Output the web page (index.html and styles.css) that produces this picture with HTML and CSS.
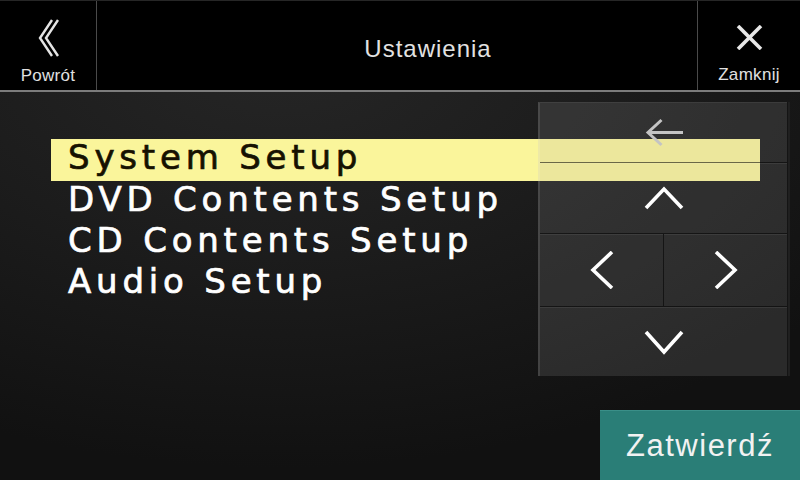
FILE: index.html
```html
<!DOCTYPE html>
<html lang="pl">
<head>
<meta charset="utf-8">
<title>Ustawienia</title>
<link rel="stylesheet" href="styles.css">
</head>
<body>
<div class="app">
  <header class="header">
    <div class="nav-btn back">
      <svg class="icon-back" width="22" height="38" viewBox="0 0 22 38">
        <polyline points="14,1 2,19 14,37" />
        <polyline points="20,1 8,19 20,37" />
      </svg>
      <span class="nav-label">Powrót</span>
    </div>
    <div class="title">Ustawienia</div>
    <div class="nav-btn close">
      <svg class="icon-close" width="27" height="25" viewBox="0 0 27 25">
        <line x1="2" y1="1" x2="25" y2="24" />
        <line x1="25" y1="1" x2="2" y2="24" />
      </svg>
      <span class="nav-label">Zamknij</span>
    </div>
  </header>
  <main class="content">
    <ul class="menu">
      <li class="item selected">System Setup</li>
      <li class="item">DVD Contents Setup</li>
      <li class="item">CD Contents Setup</li>
      <li class="item">Audio Setup</li>
    </ul>
    <div class="pad">
      <div class="pad-btn wide first">
        <svg width="40" height="30" viewBox="0 0 40 30" class="ic-return">
          <path d="M39 14.5 H4 M17.5 2 L4 14.5 L17.5 27" />
        </svg>
      </div>
      <div class="pad-btn wide">
        <svg width="40" height="24" viewBox="0 0 40 24" class="ic">
          <polyline points="2,22 20,3 38,22" />
        </svg>
      </div>
      <div class="pad-btn">
        <svg width="26" height="38" viewBox="0 0 26 38" class="ic">
          <polyline points="23,1 4,19 23,37" />
        </svg>
      </div>
      <div class="pad-btn right">
        <svg width="26" height="38" viewBox="0 0 26 38" class="ic">
          <polyline points="3,1 22,19 3,37" />
        </svg>
      </div>
      <div class="pad-btn wide">
        <svg width="40" height="26" viewBox="0 0 40 26" class="ic">
          <polyline points="2,3 20,23 38,3" />
        </svg>
      </div>
    </div>
    <div class="confirm">Zatwierdź</div>
  </main>
</div>
</body>
</html>
```
FILE: styles.css
```css
* { box-sizing: border-box; }
html, body {
  margin: 0;
  padding: 0;
  width: 800px;
  height: 480px;
  overflow: hidden;
  background: #000;
}
body {
  font-family: "Liberation Sans", Arial, sans-serif;
}
.app {
  width: 800px;
  height: 480px;
  display: flex;
  flex-direction: column;
  background: radial-gradient(ellipse 700px 420px at 35% 10%, #262626 0%, #1c1c1c 50%, #111 100%);
}
.header {
  height: 92px;
  flex: none;
  display: flex;
  background: #000;
  border-top: 1px solid #262626;
  border-bottom: 2px solid #7c7c7c;
}
.nav-btn {
  display: flex;
  flex-direction: column;
  align-items: center;
  color: #e0e0e0;
}
.back {
  width: 97px;
  border-right: 1px solid #4a4a4a;
  padding-top: 18px;
}
.close {
  width: 103px;
  border-left: 1px solid #4a4a4a;
  padding-top: 24px;
}
.nav-label {
  font-size: 17px;
  line-height: 20px;
  letter-spacing: 0.3px;
}
.icon-back {
  margin-left: 2px;
  margin-bottom: 9px;
}
.icon-back polyline {
  fill: none;
  stroke: #e4e4e4;
  stroke-width: 2.4;
}
.icon-close {
  margin-bottom: 15px;
}
.icon-close line {
  stroke: #e8e8e8;
  stroke-width: 3.6;
}
.title {
  flex: 1;
  text-align: center;
  padding-left: 62px;
  padding-top: 34px;
  font-size: 24px;
  line-height: 28px;
  letter-spacing: 1px;
  color: #e2e2e2;
}
.content {
  flex: 1;
  display: grid;
  grid-template-columns: 51px 487px 62px 160px 27px 13px;
  grid-template-rows: 1fr 70px;
}
.menu {
  grid-column: 2 / 5;
  grid-row: 1;
  list-style: none;
  margin: 47px 0 0 0;
  padding: 0;
  font-family: "DejaVu Sans", sans-serif;
  font-size: 34px;
  letter-spacing: 4.8px;
  color: #fff;
  -webkit-text-stroke: 0.7px currentColor;
}
.item {
  line-height: 37px;
  padding: 0 0 4px 17px;
  white-space: nowrap;
}
.item.selected {
  padding-bottom: 5px;
  background: #faf59b;
  color: #161100;
}
.pad {
  grid-column: 3 / 6;
  grid-row: 1;
  margin-top: 10px;
  height: 274px;
  align-self: start;
  display: grid;
  grid-template-columns: 123px 1fr;
  grid-template-rows: 59px 71px 73px 71px;
  background: rgba(168, 168, 168, 0.17);
  border-left: 2px solid rgba(255, 255, 255, 0.1);
  border-top: 1px solid rgba(255, 255, 255, 0.06);
  box-shadow: 1px 0 0 #141414, 3px 0 0 #202020;
  z-index: 1;
}
.pad-btn {
  display: flex;
  align-items: center;
  justify-content: center;
  border-top: 1px solid rgba(0, 0, 0, 0.55);
  box-shadow: inset 0 1px 0 rgba(255, 255, 255, 0.07);
}
.pad-btn.first {
  border-top: none;
  box-shadow: none;
}
.pad-btn.wide {
  grid-column: 1 / 3;
}
.pad-btn.right {
  border-left: 1px solid rgba(0, 0, 0, 0.55);
}
.ic polyline {
  fill: none;
  stroke: #fff;
  stroke-width: 3.6;
}
.ic-return path {
  fill: none;
  stroke: #c4c4c4;
  stroke-width: 3;
}
.confirm {
  grid-column: 4 / 7;
  grid-row: 2;
  display: flex;
  align-items: center;
  justify-content: center;
  background: #2a7e77;
  border-top: 1px solid #3a8f88;
  color: #f2f2f2;
  font-size: 31px;
  letter-spacing: 1.5px;
}
```
